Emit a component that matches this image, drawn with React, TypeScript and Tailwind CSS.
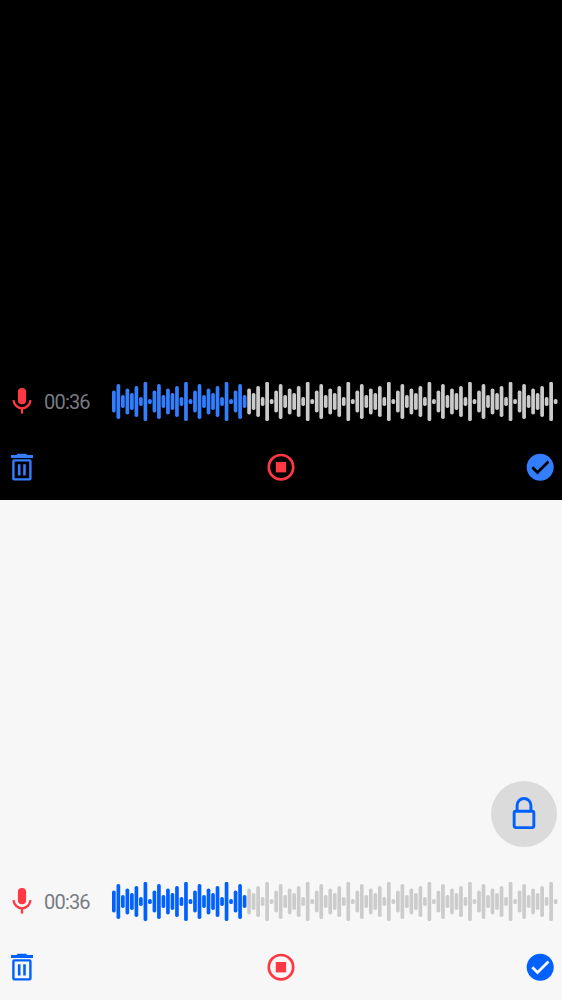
import React from "react";

const PATTERN = [22, 35, 13, 26, 17, 31, 9, 39.2, 5.2];
const BARS = Array.from({ length: 99 }, (_, i) => PATTERN[i % PATTERN.length]);
const PLAYED = 30;

function MicIcon() {
  return (
    <svg className="h-7 w-5 shrink-0 text-[#ff3844]" viewBox="0 0 20 28" fill="none">
      <rect x="5.900" y="1" width="8.200" height="16.200" rx="4" fill="currentColor" />
      <path d="M1.500 13.100c.5 4.600 3.900 8.200 8.500 8.200s8-3.600 8.500-8.200" stroke="currentColor" strokeWidth="2.300" />
      <path d="M10 21v5.600" stroke="currentColor" strokeWidth="2.300" />
    </svg>
  );
}

function TrashIcon() {
  return (
    <svg className="h-7 w-[22px]" viewBox="0 0 22 28" fill="none" stroke="currentColor">
      <path d="M0 2h5.500l1-1.200h8.700l1 1.200H22v3.100H0z" fill="currentColor" stroke="none" />
      <rect x="2.400" y="7.400" width="17" height="19" rx=".9" strokeWidth="2.400" />
      <path d="M8.200 11.200v11.400M13.500 11.200v11.400" strokeWidth="2.600" />
    </svg>
  );
}

function StopIcon() {
  return (
    <svg className="size-7 text-[#ff3844]" viewBox="0 0 28 28" fill="none">
      <circle cx="14" cy="14.200" r="12.200" stroke="currentColor" strokeWidth="2.700" />
      <rect x="8.800" y="9" width="10.300" height="10.400" fill="currentColor" />
    </svg>
  );
}

function CheckIcon({ mark }: { mark: string }) {
  return (
    <svg className="size-7" viewBox="0 0 28 28" fill="none">
      <circle cx="14.200" cy="14.200" r="13.500" fill="currentColor" />
      <path className={mark} d="M6.300 14.300l5.200 5.200L22.500 8.500" strokeWidth="2.800" />
    </svg>
  );
}

function LockIcon() {
  return (
    <svg className="h-8 w-6" viewBox="0 0 24 32" fill="none" stroke="currentColor" strokeWidth="2.900">
      <path d="M5.100 14V8.400a6.900 6.900 0 0 1 13.800 0V14" />
      <rect x="2.150" y="14.300" width="19.700" height="16.300" rx="1.700" />
    </svg>
  );
}

function Waveform({ rest }: { rest: string }) {
  return (
    <svg className="ml-[22px] h-10 w-[446px] shrink-0" viewBox="0 0 446 40">
      {BARS.map((h, i) => (
        <rect
          key={i}
          x={i * 4.508}
          y={19.5 - h / 2}
          width="3.700"
          height={h}
          rx="1.700"
          className={i < PLAYED ? "fill-current" : rest}
        />
      ))}
    </svg>
  );
}

function Recorder({ dark = false }: { dark?: boolean }) {
  return (
    <section
      className={
        dark
          ? "flex h-[500px] flex-col justify-end bg-black text-[#337eff]"
          : "flex h-[500px] flex-col justify-end bg-[#f7f7f7] text-[#0061fe]"
      }
    >
      {!dark && (
        <button
          aria-label="Lock recording"
          className="mr-[5px] mb-[35px] flex size-[66px] items-center justify-center self-end rounded-full bg-[#dbdbdb] pb-0.5"
        >
          <LockIcon />
        </button>
      )}
      <div className="flex h-10 items-center pl-3">
        <div className="flex h-10 items-start pt-[5px]">
          <MicIcon />
        </div>
        <time className="ml-3 w-[46px] font-[Roboto,sans-serif] text-[20px] leading-10 font-normal tracking-[-0.8px] whitespace-nowrap text-[#787b82]">
          00:36
        </time>
        <Waveform rest={dark ? "fill-[#cbcbcb]" : "fill-[#cccccc]"} />
      </div>
      <div className="grid h-[78px] grid-cols-3 items-start px-[11px] pt-[31px]">
        <button aria-label="Delete" className="justify-self-start">
          <TrashIcon />
        </button>
        <button aria-label="Stop" className="justify-self-center">
          <StopIcon />
        </button>
        <button aria-label="Send" className="-mr-[3px] justify-self-end">
          <CheckIcon mark={dark ? "stroke-black" : "stroke-[#f7f7f7]"} />
        </button>
      </div>
    </section>
  );
}

export default function App() {
  return (
    <main className="h-[1000px] w-[562px] overflow-hidden">
      <Recorder dark />
      <Recorder />
    </main>
  );
}
